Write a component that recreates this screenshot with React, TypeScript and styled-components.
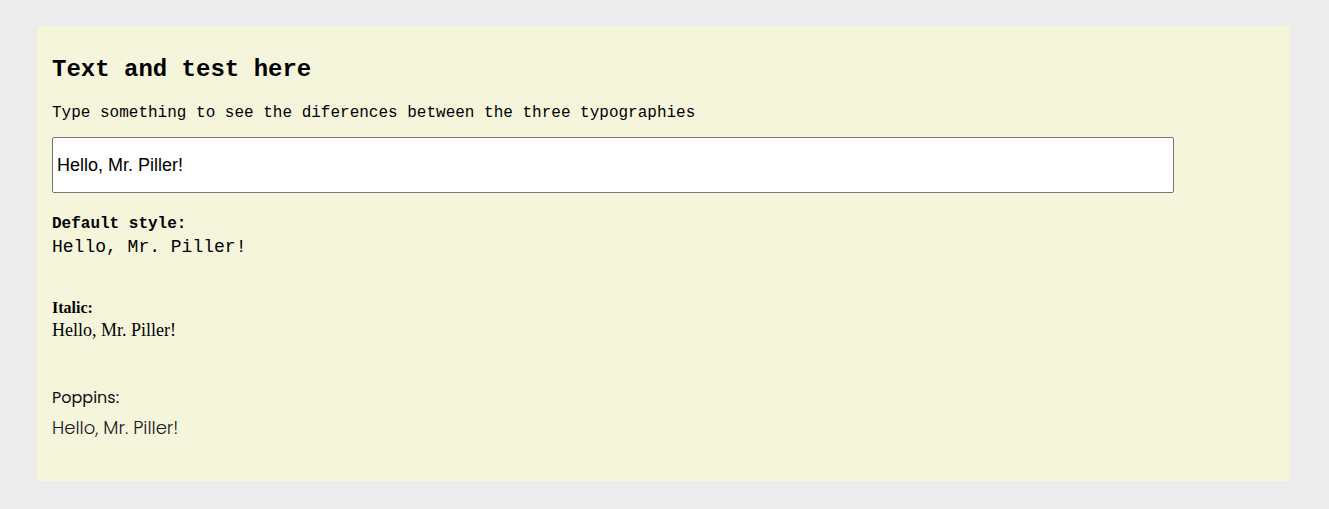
import React, { useState } from "react";
import styled, { createGlobalStyle } from "styled-components";

const GlobalStyle = createGlobalStyle`
  html, body {
    margin: 0;
    padding: 0;
    background: #ececec;
  }
  body {
    font-family: "Liberation Mono", "Courier New", monospace;
  }
`;

const Page = styled.div`
  padding: 26px 39px 28px 37px;
`;

const Panel = styled.section`
  background: #f5f5dc;
  height: 455px;
  box-sizing: border-box;
  padding: 30px 15px 0 15px;
`;

const Title = styled.h1`
  margin: 0;
  font-family: "Liberation Mono", "Courier New", monospace;
  font-size: 24px;
  font-weight: bold;
  line-height: 28px;
  color: #000;
`;

const Subtitle = styled.p`
  margin: 20px 0 0;
  font-family: "Liberation Mono", "Courier New", monospace;
  font-size: 16px;
  line-height: 18px;
  color: #000;
`;

const TextInput = styled.input`
  display: block;
  margin-top: 15px;
  width: 1122px;
  height: 56px;
  box-sizing: border-box;
  border: 1px solid #767676;
  border-radius: 2px;
  padding: 0 4px;
  background: #fff;
  font-family: "Liberation Sans", Arial, sans-serif;
  font-size: 18px;
  color: #000;
  outline: none;
`;

const Sample = styled.div<{ $gap: number }>`
  margin-top: ${(p) => p.$gap}px;
`;

const MonoLabel = styled.div`
  font-family: "Liberation Mono", "Courier New", monospace;
  font-weight: bold;
  font-size: 16px;
  line-height: 18px;
`;

const MonoValue = styled.div`
  font-family: "Liberation Mono", "Courier New", monospace;
  font-size: 18px;
  line-height: 22px;
  margin-top: 3px;
`;

const SerifLabel = styled.div`
  font-family: "Liberation Serif", "Times New Roman", serif;
  font-weight: bold;
  font-size: 16px;
  line-height: 18px;
`;

const SerifValue = styled.div`
  font-family: "Liberation Serif", "Times New Roman", serif;
  font-size: 18px;
  line-height: 22px;
  margin-top: 2px;
`;

const SansLabel = styled.div`
  font-family: Poppins, "Noto Sans", sans-serif;
  font-size: 16px;
  line-height: 22px;
  color: #111;
`;

const SansValue = styled.div`
  font-family: Poppins, "Noto Sans", sans-serif;
  font-weight: 300;
  font-size: 18px;
  line-height: 24px;
  margin-top: 7px;
  color: #1a1a1a;
`;

export default function App() {
  const [text, setText] = useState("Hello, Mr. Piller!");
  return (
    <Page>
      <GlobalStyle />
      <Panel>
        <Title>Text and test here</Title>
        <Subtitle>Type something to see the diferences between the three typographies</Subtitle>
        <TextInput value={text} onChange={(e) => setText(e.target.value)} />
        <Sample $gap={22}>
          <MonoLabel>Default style:</MonoLabel>
          <MonoValue>{text}</MonoValue>
        </Sample>
        <Sample $gap={41}>
          <SerifLabel>Italic:</SerifLabel>
          <SerifValue>{text}</SerifValue>
        </Sample>
        <Sample $gap={46}>
          <SansLabel>Poppins:</SansLabel>
          <SansValue>{text}</SansValue>
        </Sample>
      </Panel>
    </Page>
  );
}
